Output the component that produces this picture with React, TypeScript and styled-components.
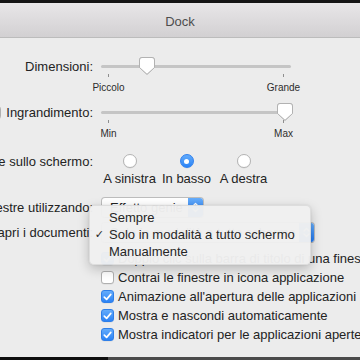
import React from 'react'
import styled, { createGlobalStyle } from 'styled-components'

const GlobalStyle = createGlobalStyle`
    html, body {
        margin: 0;
        padding: 0;
        background: #ececec;
    }
    body {
        font-family: 'Liberation Sans', Arial, sans-serif;
        font-size: 13px;
        color: #232323;
    }
    #root {
        width: 360px;
        height: 360px;
        overflow: hidden;
    }
`

const StyledWindow = styled.div`
    position: relative;
    display: flex;
    flex-direction: column;
    width: 360px;
    height: 360px;
    overflow: hidden;
    background: #ececec;
`

const StyledTopStrip = styled.div`
    height: 3px;
    flex-shrink: 0;
    background: #151515;
`

const StyledTitleBar = styled.div`
    display: flex;
    align-items: center;
    justify-content: center;
    box-sizing: border-box;
    height: 35px;
    padding-top: 3px;
    flex-shrink: 0;
    background: linear-gradient(#e8e6e8, #d2d0d2);
    border-bottom: 1px solid #bcbcbc;
    color: #4d4d4d;
    font-size: 13px;
`

const StyledBody = styled.div`
    flex: 1;
    padding-top: 19px;
`

const StyledRow = styled.div<{ $top: number }>`
    display: grid;
    grid-template-columns: 93px 1fr;
    column-gap: 8px;
    align-items: start;
    margin-top: ${(p) => p.$top}px;
`

const StyledLabel = styled.div<{ $height: number }>`
    display: flex;
    align-items: center;
    justify-content: flex-end;
    gap: 5px;
    width: 93px;
    height: ${(p) => p.$height}px;
    white-space: nowrap;
`

const StyledSlider = styled.div`
    width: 190px;
`

const StyledSliderBox = styled.div`
    position: relative;
    display: flex;
    align-items: center;
    height: 18px;
`

const StyledTrack = styled.div`
    width: 100%;
    height: 3px;
    border-radius: 2px;
    background: #c5c5c5;
`

const StyledThumb = styled.svg`
    position: absolute;
    top: 0;
    filter: drop-shadow(0 0.5px 0.6px rgba(0, 0, 0, 0.25));
`

const StyledTicks = styled.div`
    display: flex;
    justify-content: space-between;
    padding: 0 7px;
    margin-top: -1px;
    height: 3px;
`

const StyledTick = styled.div`
    width: 1px;
    height: 3px;
    background: #8e8e8e;
`

const StyledScale = styled.div`
    display: flex;
    justify-content: space-between;
    padding: 0 7px;
    margin-top: 5px;
    line-height: 12px;
`

const StyledScaleLabel = styled.span`
    display: flex;
    justify-content: center;
    width: 1px;
    white-space: nowrap;
    font-size: 10px;
    color: #2c2c2c;
`

const StyledRadioGrid = styled.div`
    display: grid;
    grid-template-columns: repeat(3, 57px);
`

const StyledRadioCell = styled.div`
    display: flex;
    flex-direction: column;
    align-items: center;
`

const StyledRadio = styled.div<{ $on?: boolean }>`
    display: flex;
    align-items: center;
    justify-content: center;
    box-sizing: border-box;
    width: 14px;
    height: 14px;
    border-radius: 50%;
    border: 1px solid ${(p) => (p.$on ? '#2f80ee' : '#b4b4b4')};
    background: ${(p) => (p.$on ? 'linear-gradient(#62abfb, #2a83f6)' : '#ffffff')};
    box-shadow: 0 0.5px 0.5px rgba(0, 0, 0, 0.08);
`

const StyledRadioDot = styled.div`
    width: 5px;
    height: 5px;
    border-radius: 50%;
    background: #ffffff;
`

const StyledRadioText = styled.span`
    margin-top: 3px;
    line-height: 16px;
    white-space: nowrap;
`

const StyledPopup = styled.div<{ $width: number }>`
    display: flex;
    box-sizing: border-box;
    width: ${(p) => p.$width}px;
    height: 21px;
    border: 1px solid #bdbdbd;
    border-bottom-color: #a9a9a9;
    border-radius: 4px;
    background: #ffffff;
    overflow: hidden;
`

const StyledPopupText = styled.span`
    flex: 1;
    padding-left: 8px;
    line-height: 19px;
    white-space: nowrap;
    overflow: hidden;
`

const StyledPopupArrow = styled.div`
    display: flex;
    align-items: center;
    justify-content: center;
    width: 15px;
    background: linear-gradient(#66adfb, #1f78f3);
`

const StyledCheckList = styled.div`
    display: flex;
    flex-direction: column;
    margin-top: 6px;
    margin-left: 101px;
`

const StyledCheckRow = styled.div`
    display: flex;
    align-items: center;
    gap: 4px;
    height: 19px;
    white-space: nowrap;
`

const StyledCheckbox = styled.div<{ $on?: boolean }>`
    display: flex;
    align-items: center;
    justify-content: center;
    flex-shrink: 0;
    box-sizing: border-box;
    width: 13px;
    height: 13px;
    border-radius: 3px;
    border: 1px solid ${(p) => (p.$on ? '#2f7fe8' : '#b0b0b0')};
    background: ${(p) => (p.$on ? 'linear-gradient(#64acfb, #2b82f5)' : '#ffffff')};
    box-shadow: 0 0.5px 0.5px rgba(0, 0, 0, 0.08);
`

const StyledMenu = styled.div`
    position: absolute;
    left: 89px;
    top: 205px;
    width: 222px;
    box-sizing: border-box;
    padding: 3px 0 4px;
    border-radius: 5px;
    background: rgba(240, 240, 240, 0.97);
    border: 1px solid rgba(0, 0, 0, 0.08);
    box-shadow: 0 4px 12px rgba(0, 0, 0, 0.22), 0 0 2px rgba(0, 0, 0, 0.1);
`

const StyledMenuItem = styled.div`
    display: grid;
    grid-template-columns: 19px 1fr;
    height: 17px;
    line-height: 17px;
    color: #262626;
    white-space: nowrap;
`

const StyledMenuCheck = styled.span`
    justify-self: end;
    padding-right: 5px;
    font-family: 'DejaVu Sans', sans-serif;
    font-size: 11px;
`

const StyledBottomStrip = styled.div`
    display: flex;
    height: 3px;
    flex-shrink: 0;
    background: #4a4a4a;
`

const StyledBottomDark = styled.div`
    width: 108px;
    background: #0e0e0e;
`

const Thumb = ({ value }: { value: number }) => (
    <StyledThumb
        width="16"
        height="18"
        viewBox="0 0 16 18"
        style={{ left: 7 + value * 176 - 8 + 1 }}
    >
        <path
            d="M3 0.5 H13 A2.5 2.5 0 0 1 15.5 3 V10.5 L8 17.3 L0.5 10.5 V3 A2.5 2.5 0 0 1 3 0.5 Z"
            fill="#ffffff"
            stroke="#b2b2b2"
            strokeWidth="1"
        />
    </StyledThumb>
)

type SliderProps = {
    value: number
    min: string
    max: string
}

const Slider = ({ value, min, max }: SliderProps) => (
    <StyledSlider>
        <StyledSliderBox>
            <StyledTrack />
            <Thumb value={value} />
        </StyledSliderBox>
        <StyledTicks>
            <StyledTick />
            <StyledTick />
        </StyledTicks>
        <StyledScale>
            <StyledScaleLabel>{min}</StyledScaleLabel>
            <StyledScaleLabel>{max}</StyledScaleLabel>
        </StyledScale>
    </StyledSlider>
)

const Tick = () => (
    <svg width="9" height="8" viewBox="0 0 9 8">
        <path
            d="M1.3 4.2 L3.6 6.4 L7.8 1.4"
            fill="none"
            stroke="#ffffff"
            strokeWidth="1.7"
            strokeLinecap="round"
            strokeLinejoin="round"
        />
    </svg>
)

const Checkbox = ({ on }: { on?: boolean }) => (
    <StyledCheckbox $on={on}>{on && <Tick />}</StyledCheckbox>
)

const Chevrons = () => (
    <svg width="7" height="11" viewBox="0 0 7 11">
        <path
            d="M1 4 L3.5 1.5 L6 4 M1 7 L3.5 9.5 L6 7"
            fill="none"
            stroke="#ffffff"
            strokeWidth="1.3"
            strokeLinecap="round"
            strokeLinejoin="round"
        />
    </svg>
)

const Popup = ({ text, width }: { text: string; width: number }) => (
    <StyledPopup $width={width}>
        <StyledPopupText>{text}</StyledPopupText>
        <StyledPopupArrow>
            <Chevrons />
        </StyledPopupArrow>
    </StyledPopup>
)

const positions = [
    { label: 'A sinistra', on: false },
    { label: 'In basso', on: true },
    { label: 'A destra', on: false },
]

const checks = [
    { label: 'Doppio clic sulla barra di titolo di una finestra per ridurla', on: true },
    { label: 'Contrai le finestre in icona applicazione', on: false },
    { label: "Animazione all'apertura delle applicazioni", on: true },
    { label: 'Mostra e nascondi automaticamente', on: true },
    { label: 'Mostra indicatori per le applicazioni aperte', on: true },
]

const menuItems = [
    { label: 'Sempre', checked: false },
    { label: 'Solo in modalità a tutto schermo', checked: true },
    { label: 'Manualmente', checked: false },
]

const App = () => {
    return (
        <StyledWindow>
            <GlobalStyle />
            <StyledTopStrip />
            <StyledTitleBar>Dock</StyledTitleBar>
            <StyledBody>
                <StyledRow $top={0}>
                    <StyledLabel $height={18}>Dimensioni:</StyledLabel>
                    <Slider value={0.215} min="Piccolo" max="Grande" />
                </StyledRow>
                <StyledRow $top={9}>
                    <StyledLabel $height={18}>
                        <Checkbox />
                        Ingrandimento:
                    </StyledLabel>
                    <Slider value={1} min="Min" max="Max" />
                </StyledRow>
                <StyledRow $top={14}>
                    <StyledLabel $height={14}>Posizione sullo schermo:</StyledLabel>
                    <StyledRadioGrid>
                        {positions.map((p) => (
                            <StyledRadioCell key={p.label}>
                                <StyledRadio $on={p.on}>{p.on && <StyledRadioDot />}</StyledRadio>
                                <StyledRadioText>{p.label}</StyledRadioText>
                            </StyledRadioCell>
                        ))}
                    </StyledRadioGrid>
                </StyledRow>
                <StyledRow $top={10}>
                    <StyledLabel $height={21}>Riduci le finestre utilizzando:</StyledLabel>
                    <Popup text="Effetto genie" width={103} />
                </StyledRow>
                <StyledRow $top={4}>
                    <StyledLabel $height={21}>Preferisci i pannelli quando apri i documenti:</StyledLabel>
                    <Popup text="Solo in modalità a tutto schermo" width={214} />
                </StyledRow>
                <StyledCheckList>
                    {checks.map((c) => (
                        <StyledCheckRow key={c.label}>
                            <Checkbox on={c.on} />
                            {c.label}
                        </StyledCheckRow>
                    ))}
                </StyledCheckList>
            </StyledBody>
            <StyledBottomStrip>
                <StyledBottomDark />
            </StyledBottomStrip>
            <StyledMenu>
                {menuItems.map((m) => (
                    <StyledMenuItem key={m.label}>
                        <StyledMenuCheck>{m.checked ? '✓' : ''}</StyledMenuCheck>
                        <span>{m.label}</span>
                    </StyledMenuItem>
                ))}
            </StyledMenu>
        </StyledWindow>
    )
}

export default App
